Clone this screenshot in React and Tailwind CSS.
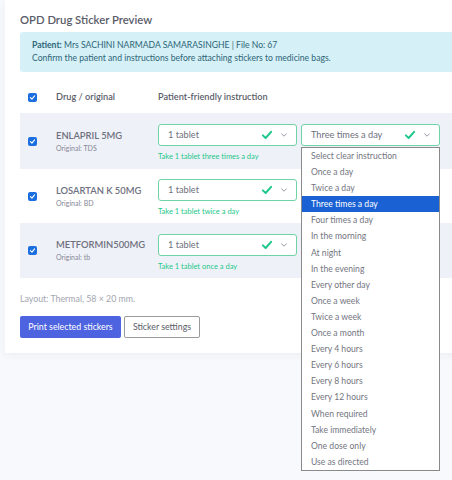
import React from "react";

const FONT = { fontFamily: '"Lato", "Noto Sans", sans-serif' };

function Check({ className = "" }) {
  return (
    <svg viewBox="0 0 16 16" className={className} fill="none">
      <path d="M2.5 8.5 L6.2 12 L13.5 3.8" stroke="#1cc88a" strokeWidth="2.6" strokeLinecap="round" strokeLinejoin="round" />
    </svg>
  );
}

function Chevron({ className = "" }) {
  return (
    <svg viewBox="0 0 10 6" className={className} fill="none">
      <path d="M1 1 L5 5 L9 1" stroke="#6e707e" strokeWidth="1.2" strokeLinecap="round" strokeLinejoin="round" />
    </svg>
  );
}

function Box() {
  return (
    <span className="inline-flex w-[9px] h-[9px] rounded-[2px] bg-[#1a6ee0] items-center justify-center">
      <svg viewBox="0 0 10 10" className="w-[7px] h-[7px]" fill="none">
        <path d="M2 5.2 L4.2 7.3 L8 2.8" stroke="white" strokeWidth="1.6" strokeLinecap="round" strokeLinejoin="round" />
      </svg>
    </span>
  );
}

function Select({ value, children }) {
  return (
    <div className="relative w-[139px]">
      <div className="h-[22px] border border-[#6fd3a6] rounded-[3px] bg-white flex items-center pl-[9px] pr-[9px]">
        <span className="flex-1 text-[9.2px] text-[#6e707e]">{value}</span>
        <Check className="w-[12px] h-[12px] mr-[8px]" />
        <Chevron className="w-[6px] h-[4px]" />
      </div>
      {children}
    </div>
  );
}

const options = [
  "Select clear instruction",
  "Once a day",
  "Twice a day",
  "Three times a day",
  "Four times a day",
  "In the morning",
  "At night",
  "In the evening",
  "Every other day",
  "Once a week",
  "Twice a week",
  "Once a month",
  "Every 4 hours",
  "Every 6 hours",
  "Every 8 hours",
  "Every 12 hours",
  "When required",
  "Take immediately",
  "One dose only",
  "Use as directed",
];

const rows = [
  { name: "ENLAPRIL 5MG", orig: "TDS", help: "Take 1 tablet three times a day", freq: "Three times a day", bg: "bg-[#eff1f8]", h: "h-[56px]", open: true },
  { name: "LOSARTAN K 50MG", orig: "BD", help: "Take 1 tablet twice a day", freq: "", bg: "bg-white", h: "h-[54px]" },
  { name: "METFORMIN500MG", orig: "tb", help: "Take 1 tablet once a day", freq: "", bg: "bg-[#eff1f8]", h: "h-[55px]" },
];

export default function App() {
  return (
    <div className="min-h-screen w-full overflow-hidden bg-[#f8f9fc] pl-[5px]" style={FONT}>
      <div className="w-[480px] bg-white shadow-[0_2px_8px_rgba(58,59,69,0.06)] pl-[15px] pt-[12px] pb-[15px]">
        <h6 className="text-[11.3px] font-semibold text-[#5a5c69] leading-[16px]">OPD Drug Sticker Preview</h6>
        <div className="mt-[4px] bg-[#d6f0f7] rounded-[3px] pl-[12px] py-[7px] text-[8.6px] leading-[13px] text-[#2c6576]">
          <div><span className="font-bold">Patient:</span> Mrs SACHINI NARMADA SAMARASINGHE | File No: 67</div>
          <div>Confirm the patient and instructions before attaching stickers to medicine bags.</div>
        </div>
        <div className="mt-[12px]">
          <div className="flex items-center h-[29px] pb-[3px] text-[9.2px] font-semibold text-[#5a5c69]">
            <div className="w-[36px] pl-[8px] flex items-center"><Box /></div>
            <div className="w-[102px]">Drug / original</div>
            <div>Patient-friendly instruction</div>
          </div>
          {rows.map((r, i) => (
            <div key={i} className={`flex items-center ${r.h} ${r.bg}`}>
              <div className="w-[36px] pl-[8px] flex items-center"><Box /></div>
              <div className="w-[102px] flex flex-col">
                <span className="text-[9.4px] font-semibold text-[#6e707e] leading-[14px]">{r.name}</span>
                <span className="text-[7px] text-[#858796] leading-[11px]">Original: {r.orig}</span>
              </div>
              <div className="flex flex-col pt-[4px]">
                <div className="flex gap-[4px]">
                  <Select value="1 tablet" />
                  <Select value={r.freq}>
                    {r.open && (
                      <div className="absolute left-0 top-[23px] w-[139px] z-10 bg-white border border-[#8a8a8a] text-[8.6px] text-[#73757f]">
                        {options.map((o) => (
                          <div
                            key={o}
                            className={`h-[16.1px] leading-[16.1px] pl-[9px] whitespace-nowrap ${o === r.freq ? "bg-[#1a62d4] text-white" : ""}`}
                          >
                            {o}
                          </div>
                        ))}
                      </div>
                    )}
                  </Select>
                </div>
                <span className="mt-[5px] text-[7.5px] leading-[11px] text-[#1cc88a]">{r.help}</span>
              </div>
            </div>
          ))}
        </div>
        <div className="mt-[14px] text-[8.8px] text-[#a3a5b0] leading-[13px]">Layout: Thermal, 58 × 20 mm.</div>
        <div className="mt-[11px] flex items-center gap-[3px]">
          <button className="h-[22px] w-[101px] bg-[#4e63df] text-white text-[8.8px] rounded-[2px]">Print selected stickers</button>
          <button className="h-[22px] w-[76px] bg-white border border-[#9a9a9a] text-[#5a5c69] text-[8.8px] rounded-[2px]">Sticker settings</button>
        </div>
      </div>
    </div>
  );
}
